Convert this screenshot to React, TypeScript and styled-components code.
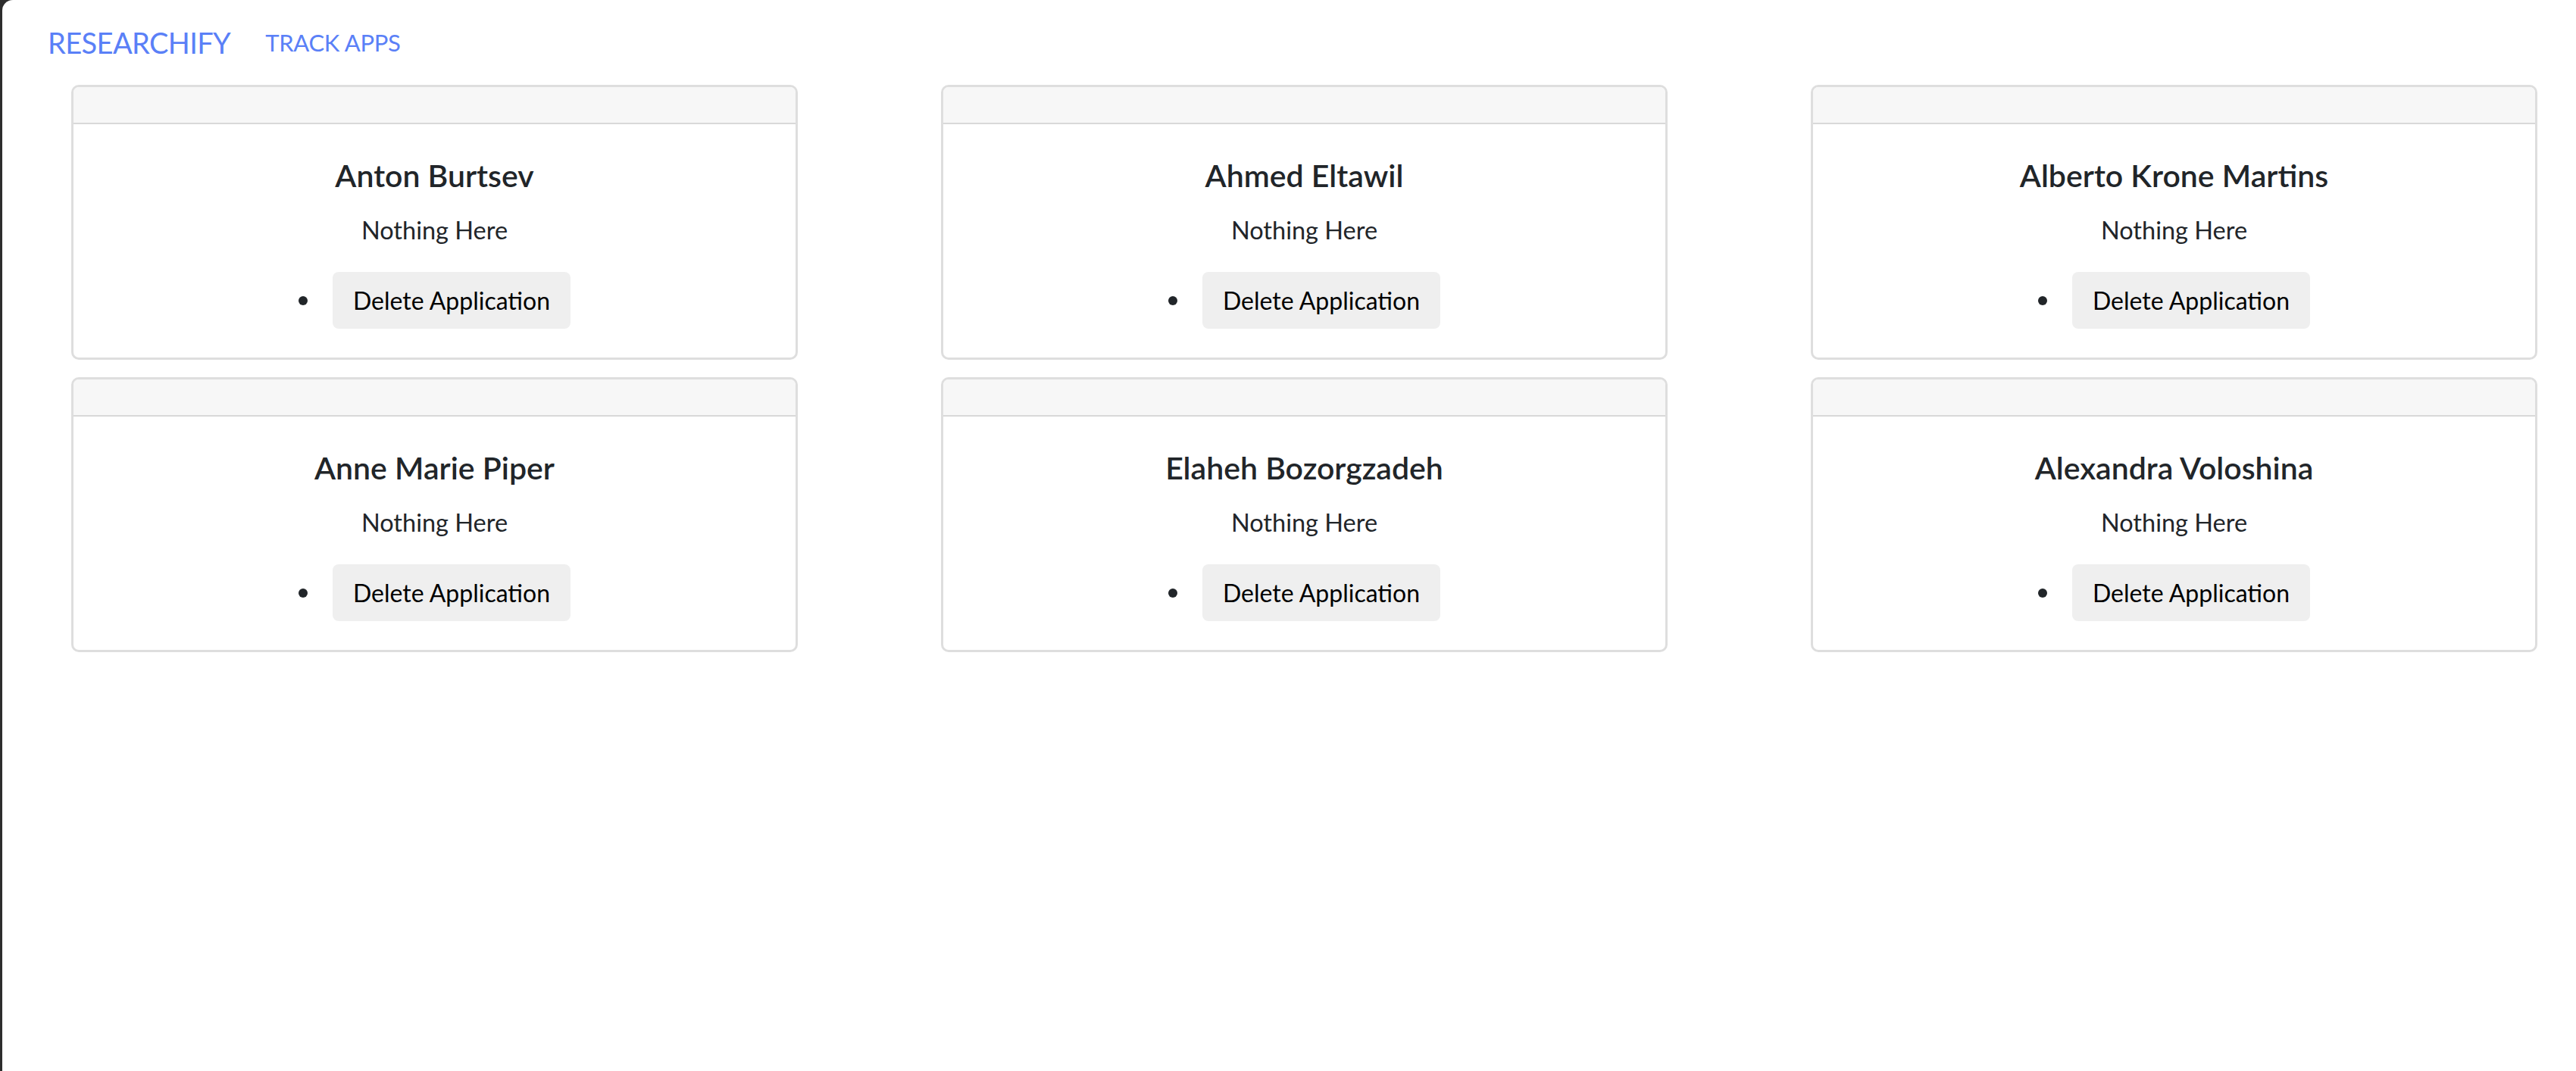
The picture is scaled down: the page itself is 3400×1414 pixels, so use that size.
import React from 'react'
import styled, { createGlobalStyle } from 'styled-components'

const GlobalStyle = createGlobalStyle`
  html, body {
    margin: 0;
    padding: 0;
    background: #2d2d2d;
  }
  * {
    box-sizing: border-box;
  }
`

const Page = styled.div`
  margin-left: 3px;
  min-height: 100vh;
  background: #ffffff;
  border-top-left-radius: 14px;
  font-family: Lato, 'Open Sans', sans-serif;
  color: #212529;
`

const Navbar = styled.nav`
  display: flex;
  align-items: center;
  gap: 46px;
  padding: 32px 0 32px 60px;
`

const Brand = styled.a`
  font-size: 38px;
  line-height: 48px;
  letter-spacing: -0.6px;
  color: #5a80f7;
  text-decoration: none;
`

const NavLink = styled.a`
  font-size: 31px;
  line-height: 39px;
  letter-spacing: -0.3px;
  color: #5a80f7;
  text-decoration: none;
`

const Grid = styled.main`
  display: grid;
  grid-template-columns: repeat(3, 959px);
  column-gap: 189px;
  row-gap: 23px;
  padding: 0 52px 0 91px;
`

const Card = styled.section`
  display: flex;
  flex-direction: column;
  border: 3px solid #dedede;
  border-radius: 10px;
  overflow: hidden;
  background: #fff;
`

const CardHeader = styled.div`
  height: 49px;
  background: #f7f7f7;
  border-bottom: 2px solid #d9d9d9;
`

const CardBody = styled.div`
  display: flex;
  flex-direction: column;
  align-items: center;
  padding: 43px 0 38px;
  text-align: center;
`

const Title = styled.h5`
  margin: 0;
  font-size: 41px;
  line-height: 50px;
  font-weight: 600;
  color: #212529;
`

const Note = styled.p`
  margin: 26px 0 35px;
  font-size: 32.5px;
  line-height: 41px;
`

const ActionRow = styled.div`
  display: flex;
  align-items: center;
  gap: 33px;
`

const Bullet = styled.span`
  width: 12px;
  height: 12px;
  border-radius: 50%;
  background: #212529;
`

const DeleteButton = styled.button`
  height: 75px;
  padding: 0 27px;
  border: none;
  border-radius: 8px;
  background: #efefef;
  color: #000;
  font-family: Lato, 'Open Sans', sans-serif;
  font-size: 32px;
  cursor: pointer;
`

const people = [
  'Anton Burtsev',
  'Ahmed Eltawil',
  'Alberto Krone Martins',
  'Anne Marie Piper',
  'Elaheh Bozorgzadeh',
  'Alexandra Voloshina',
]

export default function App() {
  return (
    <>
      <GlobalStyle />
      <Page>
        <Navbar>
          <Brand href="#">RESEARCHIFY</Brand>
          <NavLink href="#">TRACK APPS</NavLink>
        </Navbar>

        <Grid>
          {people.map((name) => (
            <Card key={name}>
              <CardHeader />
              <CardBody>
                <Title>{name}</Title>
                <Note>Nothing Here</Note>
                <ActionRow>
                  <Bullet />
                  <DeleteButton>Delete Application</DeleteButton>
                </ActionRow>
              </CardBody>
            </Card>
          ))}
        </Grid>
      </Page>
    </>
  )
}
